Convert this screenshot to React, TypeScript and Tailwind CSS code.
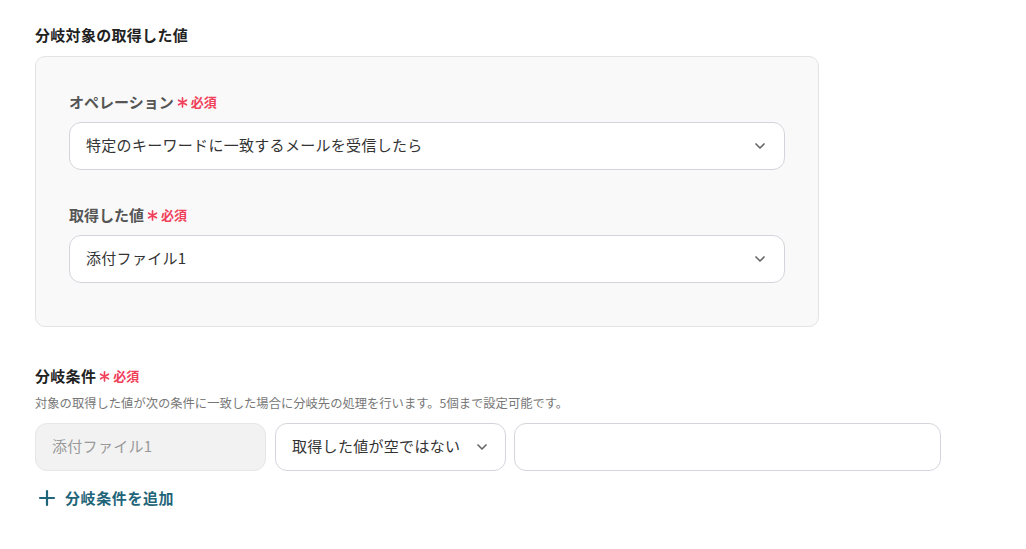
import { ChevronDown, Plus } from "lucide-react";

function Required() {
  return (
    <span className="ml-[3px] inline-flex items-center gap-[3px] text-[13px] font-bold tracking-normal text-[#f0405a]">
      <svg viewBox="0 0 12 12" className="h-[11px] w-[11px]" fill="none" stroke="currentColor" strokeWidth={1.8} strokeLinecap="round">
        <path d="M6 1v10M1.7 3.5l8.6 5M1.7 8.5l8.6-5" />
      </svg>
      必須
    </span>
  );
}

function SelectBox({ value }: { value: string }) {
  return (
    <div className="flex h-12 w-full items-center justify-between rounded-xl border border-[#d2d5db] bg-white pl-4 pr-4">
      <span className="pb-[2px] text-[15px] tracking-[0.02em] text-[#333]">{value}</span>
      <ChevronDown className="h-4 w-4 text-[#666]" strokeWidth={2.5} />
    </div>
  );
}

export default function App() {
  return (
    <div className="min-h-screen bg-white px-[35px] pt-[25px] font-['Noto_Sans_CJK_JP',sans-serif] text-[#222]">
      {/* 分岐対象 */}
      <h2 className="text-[15px] font-bold leading-5 tracking-[0.02em]">分岐対象の取得した値</h2>
      <div className="mt-[11px] w-[784px] rounded-[10px] border border-[#e3e3e3] bg-[#f9f9f9] px-[33px] pb-[43px] pt-[35px]">
        <div className="mb-[10px] flex h-5 items-center text-[15px] font-bold text-[#555]">
          オペレーション
          <Required />
        </div>
        <SelectBox value="特定のキーワードに一致するメールを受信したら" />

        <div className="mb-[10px] mt-[35px] flex h-5 items-center text-[15px] font-bold text-[#555]">
          取得した値
          <Required />
        </div>
        <SelectBox value="添付ファイル1" />
      </div>

      {/* 分岐条件 */}
      <div className="mt-[39px] flex h-5 items-center text-[15px] font-bold tracking-[0.02em]">
        分岐条件
        <Required />
      </div>
      <p className="mt-[8px] text-[12.3px] leading-[18px] text-[#777]">
        対象の取得した値が次の条件に一致した場合に分岐先の処理を行います。5個まで設定可能です。
      </p>
      <div className="mt-[11px] flex">
        <div className="flex h-12 w-[231px] items-center rounded-xl border border-[#e6e6e6] bg-[#f2f2f2] px-4 pb-[2px] text-[15px] tracking-[0.02em] text-[#999]">
          添付ファイル1
        </div>
        <div className="ml-[9px] flex h-12 w-[231px] items-center justify-between rounded-xl border border-[#d2d5db] bg-white pl-4 pr-[15px]">
          <span className="pb-[2px] text-[15px] tracking-[0.02em] text-[#333]">取得した値が空ではない</span>
          <ChevronDown className="h-4 w-4 text-[#666]" strokeWidth={2.5} />
        </div>
        <div className="ml-[8px] h-12 w-[427px] rounded-xl border border-[#d2d5db] bg-white" />
      </div>
      <button className="mt-[15px] flex items-center gap-[6px] text-[15px] font-bold tracking-[0.04em] text-[#1f6579]">
        <Plus className="h-6 w-6" strokeWidth={2.2} />
        分岐条件を追加
      </button>
    </div>
  );
}
